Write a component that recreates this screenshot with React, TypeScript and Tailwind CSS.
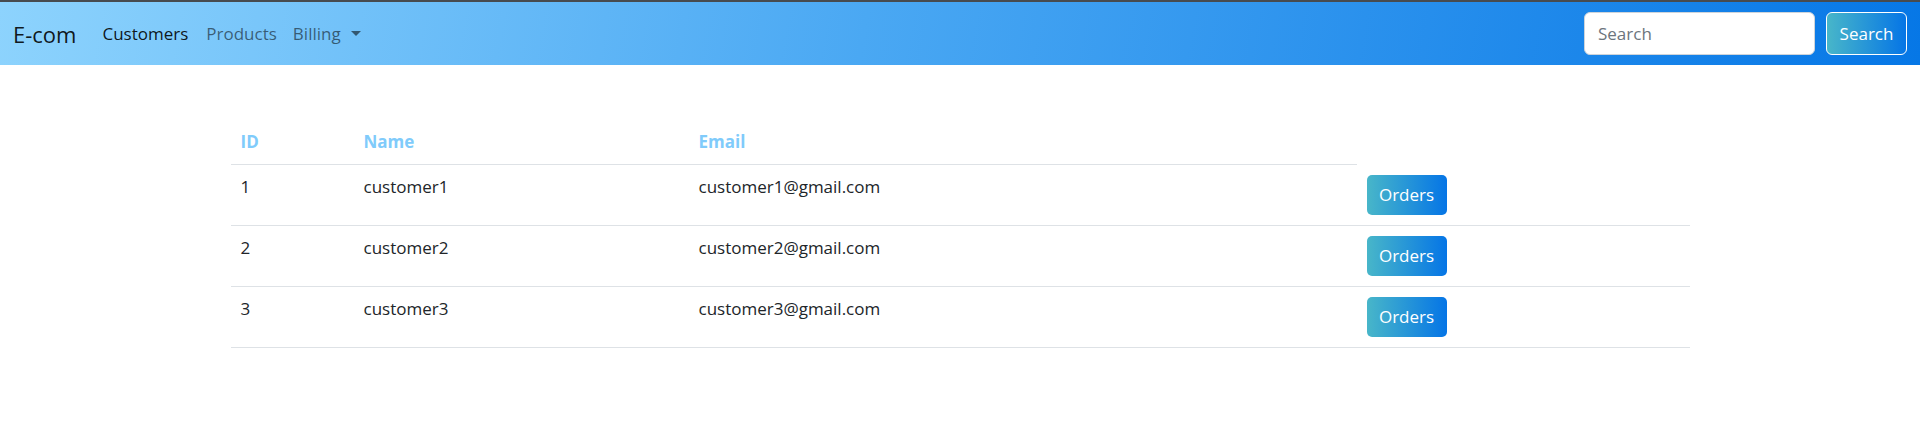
interface Customer {
  id: number;
  name: string;
  email: string;
}

const customers: Customer[] = [
  { id: 1, name: "customer1", email: "customer1@gmail.com" },
  { id: 2, name: "customer2", email: "customer2@gmail.com" },
  { id: 3, name: "customer3", email: "customer3@gmail.com" },
];

const font = { fontFamily: '"Open Sans", "Noto Sans", sans-serif' };

function Navbar() {
  return (
    <nav className="border-t-2 border-[#474b4f] bg-[linear-gradient(100deg,#8dd3fd_0%,#4aa8f3_45%,#0677e6_100%)]">
      <div className="flex h-[63px] items-center px-[13px]">
        <a className="mr-[26px] text-[22px] leading-none text-black/90" href="#">
          E-com
        </a>
        <ul className="flex items-center text-[17px] leading-6">
          <li className="mr-[18px] text-black/90">Customers</li>
          <li className="mr-[16px] text-black/55">Products</li>
          <li className="flex items-center text-black/55">
            Billing
            <span className="ml-[10px] h-0 w-0 border-x-[5px] border-t-[5px] border-x-transparent border-t-black/55"></span>
          </li>
        </ul>
        <div className="ml-auto flex items-center gap-[11px]">
          <input
            type="text"
            placeholder="Search"
            className="h-[43px] w-[231px] rounded-[6px] border border-[#ced4da] bg-white px-[13px] text-[17px] text-[#495057] outline-none placeholder:text-[#6c757d]"
          />
          <button className="h-[43px] w-[81px] rounded-[6px] border border-white bg-[linear-gradient(to_right,#48b6c9,#0575e6)] text-[17px] text-white">
            Search
          </button>
        </div>
      </div>
    </nav>
  );
}

export default function App() {
  return (
    <div className="min-h-[442px] bg-white" style={font}>
      <Navbar />
      <table className="mx-auto mt-[55px] w-[1459px] table-fixed border-collapse text-[17px] leading-6 text-[#212529]">
        <colgroup>
          <col className="w-[123px]" />
          <col className="w-[335px]" />
          <col className="w-[668px]" />
          <col className="w-[333px]" />
        </colgroup>
        <thead>
          <tr>
            <th className="border-b border-[#dee2e6] p-[10px] text-left font-bold text-[#80cbfb]">ID</th>
            <th className="border-b border-[#dee2e6] p-[10px] text-left font-bold text-[#80cbfb]">Name</th>
            <th className="border-b border-[#dee2e6] p-[10px] text-left font-bold text-[#80cbfb]">Email</th>
          </tr>
        </thead>
        <tbody>
          {customers.map((c) => (
            <tr key={c.id} className="border-b border-[#dee2e6] align-top">
              <td className="p-[10px]">{c.id}</td>
              <td className="p-[10px]">{c.name}</td>
              <td className="p-[10px]">{c.email}</td>
              <td className="p-[10px]">
                <button className="h-[40px] w-[80px] rounded-[5px] bg-[linear-gradient(to_right,#48b6c9,#0575e6)] text-[17px] text-white">
                  Orders
                </button>
              </td>
            </tr>
          ))}
        </tbody>
      </table>
    </div>
  );
}
